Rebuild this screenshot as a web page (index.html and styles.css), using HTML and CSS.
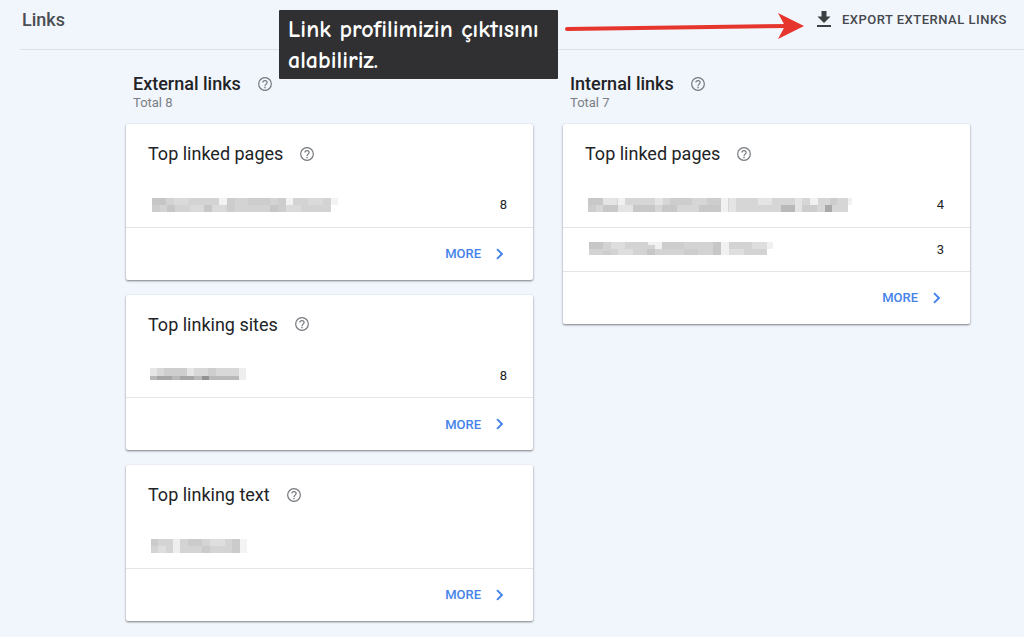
FILE: index.html
```html
<!DOCTYPE html>
<html lang="en">

<head>
    <meta charset="UTF-8">
    <meta name="viewport" content="width=device-width, initial-scale=1.0">
    <title>Links</title>
    <link rel="stylesheet" href="styles.css">
</head>

<body>
    <!-- shared icons -->
    <svg class="sprite" aria-hidden="true">
        <symbol id="help" viewBox="0 0 24 24">
            <circle cx="12" cy="12" r="9.500" fill="none" stroke="currentColor" stroke-width="1.800" />
            <path d="M8.800 9.800C8.800 8 10.200 6.800 12 6.800s3.200 1.200 3.200 3c0 2.400-3.200 2.500-3.200 5.200" fill="none" stroke="currentColor" stroke-width="1.800" />
            <path d="M11 16.200h2v2h-2z" fill="currentColor" />
        </symbol>
        <symbol id="chevron" viewBox="0 0 24 24">
            <path d="M8.600 3.600L6.500 5.700 12.800 12l-6.300 6.300 2.100 2.100L17 12z" />
        </symbol>
    </svg>

    <header class="header">
        <h1 class="header_title">Links</h1>
        <button type="button" class="export">
            <svg class="export_icon" viewBox="0 0 14 17">
                <path d="M4.500 0h5v5.500H13.500L7 12 .5 5.500h4zM0 14h14v2H0z" />
            </svg>
            Export external links
        </button>
        <!-- note and arrow on top of the header -->
        <p class="note" lang="tr">Link profilimizin çıktısını alabiliriz.</p>
        <svg class="arrow" viewBox="0 0 240 30" aria-hidden="true">
            <path d="M2 17L222 14" fill="none" stroke="#e5352d" stroke-width="4" stroke-linecap="round" />
            <path d="M213 1L239 14 213 27 220 14z" fill="#e5352d" />
        </svg>
    </header>

    <main class="columns">
        <section class="column">
            <div class="column_head">
                <h2 class="column_title">External links</h2>
                <svg class="help"><use href="#help" /></svg>
            </div>
            <p class="total">Total 8</p>

            <article class="card">
                <div class="card_head">
                    <h3 class="card_title">Top linked pages</h3>
                    <svg class="help"><use href="#help" /></svg>
                </div>
                <table class="list">
                    <tr>
                        <td>
                            <svg class="mosaic" width="190" height="14">
                                <path fill="#d3d3d3" d="M2 0h179v14H2z" />
                                <path fill="#c6c6c6" d="M2 0h14v7H2zM17 7h8v7h-8zM54 7h8v7h-8zM120 7h8v7h-8z" />
                                <path fill="#cdcdcd" d="M2 7h8v7H2zM77 0h8v14h-8zM98 0h22v7H98zM128 0h8v14h-8z" />
                                <path fill="#dadada" d="M24 0h15v7H24zM40 7h14v7H40zM62 7h14v7H62zM136 7h15v7h-15zM158 0h15v7h-15z" />
                                <path fill="#f3f3f3" d="M69 0h8v7h-8zM136 0h7v7h-7zM181 0h7v7h-7z" />
                            </svg>
                        </td>
                        <td class="count">8</td>
                    </tr>
                </table>
                <div class="card_foot">
                    <a href="#" class="more">More <svg class="chevron"><use href="#chevron" /></svg></a>
                </div>
            </article>

            <article class="card">
                <div class="card_head">
                    <h3 class="card_title">Top linking sites</h3>
                    <svg class="help"><use href="#help" /></svg>
                </div>
                <table class="list">
                    <tr>
                        <td>
                            <svg class="mosaic" width="98" height="14">
                                <path fill="#d8d8d8" d="M0 0h89v8H0z" />
                                <path fill="#cecece" d="M14 0h23v8H14zM58 0h8v8h-8z" />
                                <path fill="#e6e6e6" d="M37 0h7v8h-7zM0 0h7v8H0z" />
                                <path fill="#b9b9b9" d="M0 8h89v4H0z" />
                                <path fill="#a6a6a6" d="M7 8h15v4H7zM30 8h14v4H30z" />
                                <path fill="#929292" d="M52 8h7v4h-7z" />
                                <path fill="#eeeeee" d="M89 0h7v12h-7z" />
                            </svg>
                        </td>
                        <td class="count">8</td>
                    </tr>
                </table>
                <div class="card_foot">
                    <a href="#" class="more">More <svg class="chevron"><use href="#chevron" /></svg></a>
                </div>
            </article>

            <article class="card">
                <div class="card_head">
                    <h3 class="card_title">Top linking text</h3>
                    <svg class="help"><use href="#help" /></svg>
                </div>
                <table class="list">
                    <tr>
                        <td>
                            <svg class="mosaic" width="98" height="14">
                                <path fill="#d4d4d4" d="M1 0h22v14H1zM30 0h60v14H30z" />
                                <path fill="#cbcbcb" d="M1 0h7v7H1zM38 0h14v7H38zM52 7h8v7h-8zM82 0h8v14h-8z" />
                                <path fill="#dedede" d="M8 7h8v7H8zM60 0h15v7H60z" />
                                <path fill="#eeeeee" d="M23 0h7v14h-7z" />
                                <path fill="#f4f4f4" d="M90 0h7v14h-7z" />
                            </svg>
                        </td>
                        <td class="count"></td>
                    </tr>
                </table>
                <div class="card_foot">
                    <a href="#" class="more">More <svg class="chevron"><use href="#chevron" /></svg></a>
                </div>
            </article>
        </section>

        <section class="column">
            <div class="column_head">
                <h2 class="column_title">Internal links</h2>
                <svg class="help"><use href="#help" /></svg>
            </div>
            <p class="total">Total 7</p>

            <article class="card">
                <div class="card_head">
                    <h3 class="card_title">Top linked pages</h3>
                    <svg class="help"><use href="#help" /></svg>
                </div>
                <table class="list">
                    <tr>
                        <td>
                            <svg class="mosaic" width="266" height="14">
                                <path fill="#d6d6d6" d="M1 0h260v14H1z" />
                                <path fill="#c8c8c8" d="M1 0h15v7H1zM16 7h15v7H16zM46 7h22v7H46zM112 7h22v7h-22zM75 7h15v7H75z" />
                                <path fill="#cdcdcd" d="M1 7h8v7H1zM83 0h22v7H83zM120 0h14v7h-14zM243 0h7v7h-7zM215 7h15v7h-15z" />
                                <path fill="#b9b9b9" d="M194 7h14v7h-14z" />
                                <path fill="#a9a9a9" d="M238 7h7v7h-7z" />
                                <path fill="#e4e4e4" d="M31 7h15v7H31zM68 0h8v7h-8zM16 0h14v7H16zM142 0h7v14h-7zM171 0h14v7h-14zM208 0h7v14h-7z" />
                                <path fill="#f1f1f1" d="M31 0h7v7h-7zM134 0h7v14h-7zM223 0h8v7h-8zM261 0h4v7h-4z" />
                            </svg>
                        </td>
                        <td class="count">4</td>
                    </tr>
                    <tr>
                        <td>
                            <svg class="mosaic" width="190" height="14">
                                <path fill="#d3d3d3" d="M2 0h178v13H2z" />
                                <path fill="#c7c7c7" d="M2 0h14v7H2zM60 7h8v6h-8zM126 0h8v13h-8z" />
                                <path fill="#cdcdcd" d="M75 0h22v7H75zM97 7h14v6H97zM16 9h8v4h-8z" />
                                <path fill="#dedede" d="M24 0h14v7H24zM31 7h15v6H31zM142 7h15v6h-15zM165 0h15v7h-15z" />
                                <path fill="#f1f1f1" d="M68 0h7v7h-7zM61 0h7v3h-7zM134 0h8v13h-8zM180 0h6v7h-6z" />
                            </svg>
                        </td>
                        <td class="count">3</td>
                    </tr>
                </table>
                <div class="card_foot">
                    <a href="#" class="more">More <svg class="chevron"><use href="#chevron" /></svg></a>
                </div>
            </article>
        </section>
    </main>
</body>

</html>
```
FILE: styles.css
```css
* {
    margin: 0;
    padding: 0;
    box-sizing: border-box;
}

body {
    background-color: #f1f5fc;
    font-family: Roboto, "Liberation Sans", sans-serif;
    color: #212326;
}

.sprite {
    display: none;
}

.header {
    position: relative;
    display: flex;
    justify-content: space-between;
    align-items: center;
    height: 50px;
    margin-left: 20px;
    padding: 0 17px 11px 2px;
    border-bottom: 1px solid #dcdfe3;
}

.header_title {
    font-size: 18px;
    font-weight: 500;
    color: #4a4d51;
}

.export {
    display: flex;
    align-items: center;
    gap: 11px;
    border: none;
    background: none;
    font-family: inherit;
    font-size: 13px;
    font-weight: 500;
    letter-spacing: 0.5px;
    text-transform: uppercase;
    color: #45484c;
    cursor: pointer;
}

.export_icon {
    width: 14px;
    height: 17px;
    fill: #3c4043;
}

.note {
    position: absolute;
    top: 10px;
    left: 259px;
    width: 279px;
    padding: 4px 0 3px 9px;
    border-radius: 1px;
    background-color: #303032;
    color: #fff;
    font-family: "Comic Sans MS", "Comic Neue", cursive;
    font-size: 24px;
    font-weight: 700;
    line-height: 31px;
}

.arrow {
    position: absolute;
    top: 12px;
    left: 545px;
    width: 240px;
    height: 30px;
}

.columns {
    display: grid;
    grid-template-columns: 1fr 1fr;
    gap: 30px;
    padding: 23px 54px 16px 126px;
}

.column_head {
    display: flex;
    align-items: center;
    gap: 16px;
    padding-left: 7px;
}

.column_title {
    font-size: 18px;
    font-weight: 500;
    line-height: 22px;
}

.help {
    width: 16px;
    height: 16px;
    color: #75797e;
}

.total {
    padding-left: 7px;
    margin-bottom: 14px;
    font-size: 13px;
    line-height: 15px;
    color: #7b7f84;
}

.card {
    margin-bottom: 15px;
    border-radius: 2px;
    background-color: #fff;
    box-shadow: 0 1px 2px rgba(0, 0, 0, .4), 0 1px 3px rgba(0, 0, 0, .12);
}

.card_head {
    display: flex;
    align-items: center;
    gap: 16px;
    height: 59px;
    padding-left: 22px;
}

.card_title {
    font-size: 18px;
    font-weight: 400;
}

.list {
    width: 100%;
    border-collapse: collapse;
}

.list td {
    height: 44px;
    padding-left: 24px;
    border-bottom: 1px solid #e3e5e8;
    vertical-align: middle;
}

.list .count {
    padding-right: 26px;
    text-align: right;
    font-size: 13px;
}

.mosaic {
    display: block;
    shape-rendering: crispEdges;
}

.card_foot {
    display: flex;
    justify-content: flex-end;
    align-items: center;
    height: 52px;
    padding-right: 25px;
}

.more {
    display: flex;
    align-items: center;
    gap: 11px;
    font-size: 13px;
    font-weight: 500;
    text-transform: uppercase;
    text-decoration: none;
    color: #4583ea;
}

.chevron {
    width: 16px;
    height: 16px;
    fill: #4583ea;
}
```
